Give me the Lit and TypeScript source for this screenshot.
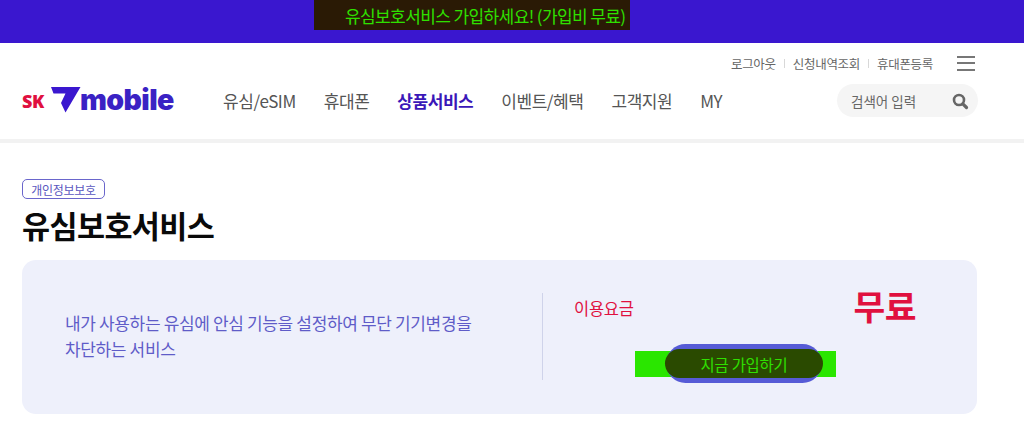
import { LitElement, html, css } from "lit";
import { customElement } from "lit/decorators.js";

@customElement("app-root")
export class AppRoot extends LitElement {
  static styles = css`
    :host {
      display: block;
      width: 1024px;
      height: 423px;
      overflow: hidden;
      background: #fff;
      font-family: "Noto Sans CJK KR", "Noto Sans", sans-serif;
      color: #111;
    }
    .banner {
      height: 43px;
      background: #3a17cf;
      display: flex;
      align-items: flex-start;
      padding-left: 314px;
      box-sizing: border-box;
    }
    .banner-mark {
      width: 316px;
      height: 30px;
      box-sizing: border-box;
      padding: 1px 0 0 31px;
      background: #2a1a05;
      color: #2fe000;
      font-size: 17px;
      line-height: 30px;
      letter-spacing: -0.6px;
      white-space: nowrap;
    }
    .header {
      height: 96px;
      box-sizing: border-box;
      padding: 0 46px 0 22px;
      display: flex;
      flex-direction: column;
    }
    .util {
      height: 40px;
      display: flex;
      justify-content: flex-end;
      align-items: center;
      font-size: 12.5px;
      color: #666;
      letter-spacing: -0.3px;
    }
    .util .sep {
      width: 1px;
      height: 9px;
      background: #d8d8d8;
      margin: 0 8px;
    }
    .burger {
      margin-left: 24px;
      margin-right: 3px;
      width: 18px;
      height: 15px;
      display: flex;
      flex-direction: column;
      justify-content: space-between;
    }
    .burger i {
      display: block;
      height: 2px;
      background: #777;
    }
    .main {
      display: flex;
      align-items: center;
      height: 35px;
    }
    .logo {
      display: flex;
      align-items: center;
      width: 201px;
      flex: none;
    }
    .sk {
      font-family: "Open Sans", sans-serif;
      font-weight: 800;
      font-size: 18px;
      color: #e0103f;
      letter-spacing: -0.3px;
      width: 29px;
    }
    .logo svg {
      display: block;
      margin-top: -2px;
    }
    .word {
      font-family: "Inter", sans-serif;
      font-weight: 900;
      font-size: 28.5px;
      letter-spacing: -0.6px;
      color: #3a22c4;
      margin-left: -1px;
      margin-top: -3px;
    }
    nav {
      display: flex;
      align-items: center;
      gap: 28px;
      font-size: 17px;
      color: #555;
      letter-spacing: -0.45px;
      flex: 1;
    }
    nav b {
      color: #3a17b8;
      font-weight: 700;
    }
    .search {
      width: 141px;
      height: 33px;
      border-radius: 17px;
      background: #f5f5f5;
      box-sizing: border-box;
      padding: 0 9px 0 14px;
      display: flex;
      align-items: center;
      justify-content: space-between;
      font-size: 13.5px;
      color: #666;
      flex: none;
    }
    .rule {
      height: 4px;
      background: #f2f2f2;
    }
    .content {
      padding: 36px 47px 0 22px;
    }
    .badge {
      display: flex;
      align-items: center;
      height: 20px;
      box-sizing: border-box;
      width: 83px;
      justify-content: center;
      border: 1px solid #6a66cc;
      border-radius: 5px;
      font-size: 12px;
      color: #5a57c0;
      letter-spacing: -0.3px;
      white-space: nowrap;
    }
    h1 {
      margin: 5px 0 14px;
      font-size: 30.5px;
      line-height: 42px;
      font-weight: 700;
      color: #0a0a0a;
      letter-spacing: -0.6px;
    }
    .card {
      height: 154px;
      background: #eef0fb;
      border-radius: 14px;
      display: grid;
      grid-template-columns: 520px 1fr;
      grid-template-rows: 87px;
      box-sizing: border-box;
      padding: 33px 0 34px;
    }
    .desc {
      padding: 0 40px 2px 43px;
      display: flex;
      align-items: center;
      font-size: 17px;
      line-height: 26px;
      color: #5f5cc8;
      letter-spacing: -0.35px;
      white-space: nowrap;
    }
    .side {
      border-left: 1px solid #cfd3ea;
      padding-left: 31px;
      display: flex;
      flex-direction: column;
    }
    .price {
      display: flex;
      align-items: center;
      width: 342px;
      justify-content: space-between;
      height: 27px;
      color: #e0103f;
    }
    .price span {
      font-size: 16.5px;
      letter-spacing: -0.3px;
      margin-top: 2px;
    }
    .price strong {
      font-size: 34.5px;
      font-weight: 700;
      letter-spacing: -0.5px;
      margin-top: -4px;
    }
    .cta-wrap {
      margin: 24px 0 0 61px;
      width: 201px;
      height: 39px;
      flex: none;
      position: relative;
      display: flex;
      padding-left: 31px;
      box-sizing: border-box;
    }
    .cta-green {
      position: absolute;
      left: 0;
      right: 0;
      top: 7px;
      height: 26px;
      background: #2ae600;
    }
    .cta {
      position: relative;
      width: 156px;
      height: 39px;
      flex: none;
      border-radius: 20px;
      background: #565bd6;
      display: flex;
      align-items: center;
      justify-content: center;
    }
    .cta::before {
      content: "";
      position: absolute;
      left: -1px;
      right: -1px;
      top: 5px;
      height: 29px;
      background: #2a4a00;
      border-radius: 15px;
    }
    .cta span {
      position: relative;
      font-size: 15.4px;
      color: #2fe000;
      letter-spacing: -0.2px;
    }
  `;

  render() {
    return html`
      <div class="banner">
        <div class="banner-mark">유심보호서비스 가입하세요! (가입비 무료)</div>
      </div>
      <header class="header">
        <div class="util">
          <span>로그아웃</span><span class="sep"></span>
          <span>신청내역조회</span><span class="sep"></span>
          <span>휴대폰등록</span>
          <span class="burger"><i></i><i></i><i></i></span>
        </div>
        <div class="main">
          <div class="logo">
            <span class="sk">SK</span>
            <svg width="30" height="26" viewBox="0 0 30 26">
              <path d="M0 0H29.5L14.5 25.5L10 16L14.5 6.5H2.5Z" fill="#3a17cf" />
            </svg>
            <span class="word">mobile</span>
          </div>
          <nav>
            <span>유심/eSIM</span>
            <span>휴대폰</span>
            <b>상품서비스</b>
            <span>이벤트/혜택</span>
            <span>고객지원</span>
            <span>MY</span>
          </nav>
          <div class="search">
            <span>검색어 입력</span>
            <svg width="18" height="18" viewBox="0 0 18 18" fill="none" stroke="#666">
              <circle cx="8" cy="8" r="5" stroke-width="2.6" />
              <path d="M11.8 11.8L15.5 15.5" stroke-width="3.2" stroke-linecap="round" />
            </svg>
          </div>
        </div>
      </header>
      <div class="rule"></div>
      <main class="content">
        <span class="badge">개인정보보호</span>
        <h1>유심보호서비스</h1>
        <section class="card">
          <div class="desc">내가 사용하는 유심에 안심 기능을 설정하여 무단 기기변경을<br />차단하는 서비스</div>
          <div class="side">
            <div class="price"><span>이용요금</span><strong>무료</strong></div>
            <div class="cta-wrap">
              <div class="cta-green"></div>
              <div class="cta"><span>지금 가입하기</span></div>
            </div>
          </div>
        </section>
      </main>
    `;
  }
}
